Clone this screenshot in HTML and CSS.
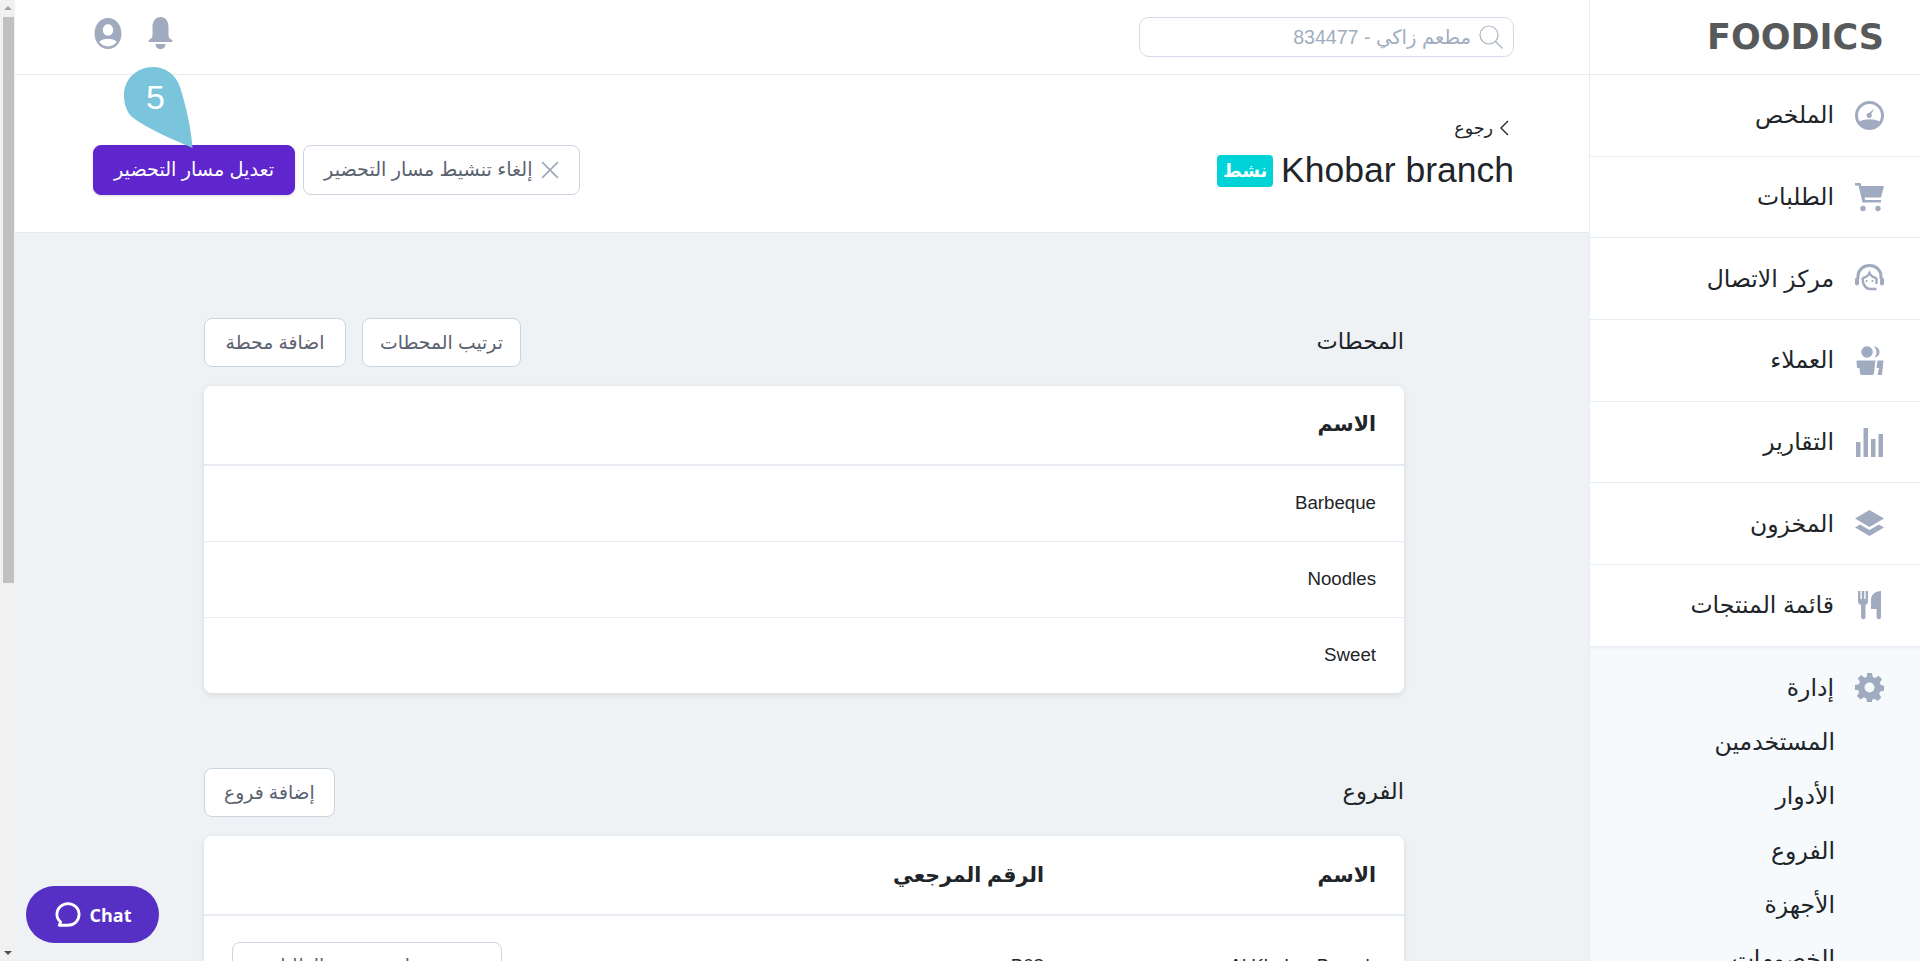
FILE: index.html
```html
<!DOCTYPE html>
<html lang="ar" dir="rtl">
<head>
    <meta charset="UTF-8">
    <meta name="viewport" content="width=device-width, initial-scale=1.0">
    <title>Foodics Console</title>
    <link rel="stylesheet" href="styles.css">
</head>
<body>
    <div class="app">
        <aside class="sidebar">
            <div class="logo-row"><span class="logo" dir="ltr">FOODICS</span></div>
            <nav>
                <a class="nav-item">
                    <svg class="nav-icon" viewBox="0 0 29 29"><path fill-rule="evenodd" d="M14.500 0a14.500 14.500 0 1 1 0 29 14.500 14.500 0 0 1 0-29zm0 3A11.500 11.500 0 0 0 3 14.500c0 2.200.6 4.200 1.700 6 2.700-1.500 6-2.300 9.800-2.300s7.100.8 9.800 2.300c1.100-1.800 1.700-3.800 1.700-6A11.500 11.500 0 0 0 14.500 3z"/><path d="M19.500 7.500l-3.200 5.200a2.700 2.700 0 1 1-1.900-1z"/></svg>
                    <span>الملخص</span>
                </a>
                <a class="nav-item">
                    <svg class="nav-icon" viewBox="0 0 29 29"><path d="M0 0h5.500l1 3H29l-3 11.500H9.500l.7 2.500H26v2.500H7.500L3.500 2.500H0z"/><circle cx="8" cy="25.500" r="2.700"/><circle cx="23" cy="25.500" r="2.700"/></svg>
                    <span>الطلبات</span>
                </a>
                <a class="nav-item">
                    <svg class="nav-icon" viewBox="0 0 29 29">
                        <path class="icon-line" stroke-width="3" d="M3 15v-2.500C3 6 8 1.500 14.500 1.500S26 6 26 12.500V15"/>
                        <rect x="0" y="13.500" width="4" height="8" rx="2"/>
                        <rect x="25" y="13.500" width="4" height="8" rx="2"/>
                        <path class="icon-line" stroke-width="2.400" d="M7.500 14c3.500-.5 5.800-2.500 7-5 1.200 2.500 3.500 4.500 7 5"/>
                        <path class="icon-line" stroke-width="2.400" d="M7.500 14c0 6 3 11 7.500 11h6.500"/>
                        <path class="icon-line" stroke-width="2.400" d="M21.500 14v6"/>
                        <circle cx="11.500" cy="17" r="1.100"/>
                        <circle cx="17.500" cy="17" r="1.100"/>
                    </svg>
                    <span>مركز الاتصال</span>
                </a>
                <a class="nav-item">
                    <svg class="nav-icon" viewBox="0 0 29 29"><circle cx="12" cy="6" r="5.800"/><path d="M19 .5c3.500 0 5.500 2.500 5.500 5.500S22.500 11 19.500 11.500C21 9.500 21.500 8 21.500 6S20.500 2 19 .5z"/><path d="M1.500 14.500h19L19 27a2 2 0 0 1-2 2H7a2 2 0 0 1-2-2L4.500 22H2z"/><path d="M22.500 14.500H28.500L27 29h-4.500L24 22H21.500z"/></svg>
                    <span>العملاء</span>
                </a>
                <a class="nav-item">
                    <svg class="nav-icon" viewBox="0 0 29 29"><path d="M1 14h4.500v15H1zM8.500 0H13v29H8.500zM16 11h4.500v18H16zM23.500 6H28v23h-4.500z"/></svg>
                    <span>التقارير</span>
                </a>
                <a class="nav-item">
                    <svg class="nav-icon" viewBox="0 0 29 29"><path d="M14.500 1L29 9.500 14.500 18 0 9.500z"/><path d="M5 15.500l9.500 5.500 9.500-5.500 5 3-14.500 8.500L0 18.500z"/></svg>
                    <span>المخزون</span>
                </a>
                <a class="nav-item">
                    <svg class="nav-icon" viewBox="0 0 29 29"><path d="M3 0h2.400v8h1.400V0h2.400v8h1.400V0H13v10c0 2-1 3.500-2.500 4v12a2.200 2.200 0 0 1-4.400 0V14C4 13.500 3 12 3 10z"/><path d="M26 0v26a2.200 2.200 0 0 1-4.400 0V18H16V9c0-5 4-9 10-9z"/></svg>
                    <span>قائمة المنتجات</span>
                </a>
            </nav>
            <div class="nav-group">
                <div class="group-title">
                    <svg class="nav-icon" viewBox="0 0 29 29"><path fill-rule="evenodd" d="M12 0h5l.8 4 2.400 1 3.400-2.300 3.500 3.500L24.800 9.600l1 2.400 3.200.8v5l-3.900.8-1 2.400 2.200 3.400-3.500 3.500-3.400-2.200-2.400 1L17 29h-5l-.8-3.800-2.400-1-3.400 2.200-3.500-3.500 2.200-3.400-1-2.400L0 17v-5l3.900-.8 1-2.400-2.200-3.400 3.500-3.500L9.600 4.700l2.400-1zm2.500 9.500a5 5 0 1 0 0 10 5 5 0 0 0 0-10z"/></svg>
                    <span>إدارة</span>
                </div>
                <a class="sub-item">المستخدمين</a>
                <a class="sub-item">الأدوار</a>
                <a class="sub-item">الفروع</a>
                <a class="sub-item">الأجهزة</a>
                <a class="sub-item">الخصومات</a>
            </div>
        </aside>

        <main class="main">
            <div class="topbar">
                <div class="search">
                    <svg class="search-icon" viewBox="0 0 24 24"><circle cx="10" cy="10" r="9"/><path d="M16.500 16.500L23.500 23.500"/></svg>
                    <span>مطعم زاكي - 834477</span>
                </div>
                <div class="top-icons">
                    <svg class="bell" viewBox="0 0 24 32"><path d="M12 0c5 0 8 4 8 10v8c0 3 2 4 3.500 5 .8.600.5 2-.5 2H1c-1 0-1.300-1.400-.5-2C2 22 4 21 4 18v-8C4 4 7 0 12 0z"/><path d="M7 27h10c0 3-2 5-5 5s-5-2-5-5z"/></svg>
                    <svg class="user" viewBox="0 0 26 30"><path fill-rule="evenodd" d="M13 0c7.500 0 13 6.500 13 15s-5.500 15-13 15S0 23.500 0 15 5.500 0 13 0zm0 6c-3 0-5 2.500-5 5.500S10 17 13 17s5-2.500 5-5.500S16 6 13 6zm0 14c-3.500 0-6.500 1-8.500 3 2 2.800 5 4.500 8.500 4.500s6.500-1.700 8.500-4.500c-2-2-5-3-8.500-3z"/></svg>
                </div>
            </div>

            <div class="page-head">
                <div class="head-title">
                    <a class="back-link">
                        <svg class="chevron" viewBox="0 0 10 16"><path d="M9 1L2 8l7 7"/></svg>
                        <span>رجوع</span>
                    </a>
                    <h1><span class="latin">Khobar branch</span> <span class="badge">نشط</span></h1>
                </div>
                <div class="head-actions">
                    <button class="btn">
                        <svg class="x-icon" viewBox="0 0 16 16"><path d="M1 1l14 14M15 1L1 15"/></svg>
                        إلغاء تنشيط مسار التحضير
                    </button>
                    <button class="btn btn-primary">تعديل مسار التحضير</button>
                    <div class="step-pin">
                        <svg viewBox="0 0 69 82"><path d="M29 0C42 0 52 8 56 20c7 22 11 42 12.500 61C48 72 24 62 8 50 2 44 0 36 0 28 0 12 13 0 29 0z"/></svg>
                        <span dir="ltr">5</span>
                    </div>
                </div>
            </div>

            <div class="content">
                <section class="section">
                    <div class="section-head">
                        <h2>المحطات</h2>
                        <div class="section-actions">
                            <button class="btn btn-small btn-sort">ترتيب المحطات</button>
                            <button class="btn btn-small btn-add">اضافة محطة</button>
                        </div>
                    </div>
                    <div class="card">
                        <div class="card-row card-head"><b>الاسم</b></div>
                        <div class="card-row latin">Barbeque</div>
                        <div class="card-row latin">Noodles</div>
                        <div class="card-row latin">Sweet</div>
                    </div>
                </section>

                <section class="section">
                    <div class="section-head">
                        <h2>الفروع</h2>
                        <div class="section-actions">
                            <button class="btn btn-small">إضافة فروع</button>
                        </div>
                    </div>
                    <div class="card">
                        <div class="card-row card-head branch-grid">
                            <b>الاسم</b>
                            <b>الرقم المرجعي</b>
                            <span></span>
                        </div>
                        <div class="card-row branch-grid branch-row">
                            <span class="latin">Al Khobar Branch</span>
                            <span class="latin">B08</span>
                            <span class="branch-action"><button class="btn btn-small">تعيين شاشة عرض الطلبات</button></span>
                        </div>
                    </div>
                </section>
            </div>
        </main>

        <div class="scrollbar">
            <span class="arrow arrow-up"></span>
            <span class="thumb"></span>
            <span class="arrow arrow-down"></span>
        </div>
    </div>

    <button class="chat" dir="ltr">
        <svg viewBox="0 0 24 24"><path d="M12 2.200c5.300 0 9.500 4 9.500 9.300s-4.200 9.300-9.500 9.300H4.500l1.200-2.800C3.700 16.300 2.500 14 2.500 11.500 2.500 6.200 6.700 2.200 12 2.200z"/></svg>
        <span>Chat</span>
    </button>
</body>
</html>
```

FILE: styles.css
```css
:root {
    --purple: #5f26cd;
    --icon: #a1abbf;
    --line: #e8ebf3;
    --border: #cbd5e0;
    --text: #212529;
    --muted: #5a6270;
}

* {
    margin: 0;
    padding: 0;
    box-sizing: border-box;
}

html, body {
    height: 100%;
    overflow: hidden;
}

body {
    font-family: "Liberation Sans", "Noto Sans", "DejaVu Sans", sans-serif;
    color: var(--text);
    background-color: #eff2f5;
}

.latin {
    font-family: "Liberation Sans", sans-serif;
}

.app {
    display: flex;
    height: 961px;
}

/* sidebar */
.sidebar {
    width: 331px;
    flex-shrink: 0;
    background-color: white;
    border-left: 1px solid var(--line);
    overflow: hidden;
}

.logo-row {
    height: 75px;
    padding: 15px 36px 0 0;
    border-bottom: 1px solid var(--line);
}

.logo {
    display: block;
    width: 177px;
    font-family: "DejaVu Sans", sans-serif;
    font-weight: 700;
    font-size: 35px;
    line-height: 44px;
    color: #58595b;
    text-align: left;
}

.nav-item {
    display: flex;
    align-items: center;
    gap: 21px;
    height: 81.7px;
    padding-right: 36px;
    font-size: 23.5px;
    border-bottom: 1px solid var(--line);
}

.nav-icon {
    width: 29px;
    height: 29px;
    flex-shrink: 0;
    fill: var(--icon);
}

.icon-line {
    fill: none;
    stroke: var(--icon);
}

.nav-group {
    height: 320px;
    padding: 26px 36px 0 0;
    background-color: #f7fafc;
    box-shadow: inset 0 4px 4px -3px rgba(0, 0, 0, 0.06);
}

.group-title {
    display: flex;
    align-items: center;
    gap: 21px;
    height: 30px;
    font-size: 23.5px;
}

.sub-item {
    display: block;
    height: 54.4px;
    padding-right: 49px;
    padding-top: 24px;
    font-size: 23.5px;
    line-height: 30px;
}

/* main column */
.main {
    flex: 1;
    min-width: 0;
    background-color: #eff2f5;
    overflow: hidden;
}

.topbar {
    display: flex;
    align-items: center;
    justify-content: space-between;
    height: 75px;
    padding: 0 75px 0 78px;
    background-color: white;
    border-bottom: 1px solid var(--line);
}

.search {
    display: flex;
    align-items: center;
    gap: 8px;
    width: 375px;
    height: 40px;
    padding-right: 10px;
    color: #a1adc0;
    font-size: 19.6px;
    border: 1px solid #d5dae8;
    border-radius: 10px;
}

.search-icon {
    width: 24px;
    height: 24px;
    fill: none;
    stroke: #a9b4c6;
    stroke-width: 1.200;
}

.top-icons {
    display: flex;
    align-items: center;
    gap: 23px;
    margin-top: -8px;
}

.bell {
    width: 29px;
    height: 32px;
    fill: var(--icon);
}

.user {
    width: 30px;
    height: 31px;
    fill: var(--icon);
}

.page-head {
    display: flex;
    align-items: center;
    justify-content: space-between;
    height: 158px;
    padding: 0 75px 0 78px;
    background-color: white;
    border-bottom: 1px solid #e6eaf0;
}

.head-title {
    padding-top: 2px;
}

.back-link {
    display: flex;
    align-items: center;
    gap: 6px;
    font-size: 17.5px;
    margin: 0 5px 9px 0;
}

.chevron {
    width: 10px;
    height: 16px;
    fill: none;
    stroke: var(--text);
    stroke-width: 1.400;
}

h1 {
    display: flex;
    align-items: center;
    gap: 8px;
    font-weight: 400;
    font-size: 35.5px;
    line-height: 44px;
}

.badge {
    display: inline-block;
    width: 56px;
    height: 32px;
    margin-top: 2px;
    font-size: 18px;
    font-weight: 700;
    line-height: 32px;
    text-align: center;
    color: white;
    background-color: #00d3d8;
    border-radius: 4px;
}

.head-actions {
    position: relative;
    display: flex;
    gap: 8px;
    margin-top: 32px;
}

.btn {
    display: inline-flex;
    align-items: center;
    justify-content: center;
    gap: 8px;
    height: 50px;
    padding: 0 20px;
    font-family: inherit;
    font-size: 19.2px;
    white-space: nowrap;
    color: var(--muted);
    background-color: white;
    border: 1px solid var(--border);
    border-radius: 8px;
}

.btn-primary {
    color: white;
    background-color: var(--purple);
    border-color: var(--purple);
    box-shadow: 0 1px 3px rgba(0, 0, 0, 0.15);
}

.btn-small {
    height: 49px;
    font-size: 18.8px;
    padding: 0 19px;
}

.btn-sort {
    width: 159px;
    padding: 0;
}

.btn-add {
    width: 142px;
    padding: 0;
}

.x-icon {
    width: 18px;
    height: 18px;
    fill: none;
    stroke: #9aa6b8;
    stroke-width: 1.400;
}

.step-pin {
    position: absolute;
    left: 31px;
    top: -78px;
    width: 69px;
    height: 82px;
}

.step-pin svg {
    display: block;
    width: 69px;
    height: 82px;
    fill: #7ac4dc;
}

.step-pin span {
    position: absolute;
    left: 22px;
    top: 10px;
    font-size: 34px;
    line-height: 40px;
    color: white;
}

/* content */
.content {
    padding: 85px 185px 0 189px;
}

.section {
    margin-bottom: 75px;
}

.section-head {
    display: flex;
    align-items: center;
    justify-content: space-between;
    margin-bottom: 19px;
}

h2 {
    margin-bottom: 3px;
    font-weight: 400;
    font-size: 22.6px;
}

.section-actions {
    display: flex;
    gap: 16px;
}

.card {
    background-color: white;
    border-radius: 8px;
    box-shadow: 0 2px 6px rgba(0, 0, 0, 0.1);
}

.card-row {
    display: flex;
    align-items: center;
    height: 76px;
    padding: 0 28px 2px;
    font-size: 18.7px;
    border-bottom: 1px solid var(--line);
}

.card-row:last-child {
    height: 75px;
    border-bottom: none;
}

.card-head {
    height: 80px;
    padding-bottom: 2px;
    font-size: 20.5px;
    border-bottom: 2px solid var(--line);
}

.branch-grid {
    display: grid;
    grid-template-columns: 332px 1fr auto;
}

.card-head.branch-grid {
    padding-bottom: 0;
}

.card-row.branch-row {
    height: 100px;
    padding-bottom: 0;
}

.branch-action {
    justify-self: end;
}

.branch-action .btn {
    width: 270px;
}

/* fake left scrollbar, the page is rtl */
.scrollbar {
    position: relative;
    width: 15px;
    flex-shrink: 0;
    background-color: #f1f1f1;
}

.thumb {
    position: absolute;
    top: 17px;
    left: 3px;
    width: 11px;
    height: 566px;
    background-color: #c1c1c1;
}

.arrow {
    position: absolute;
    left: 4px;
    width: 0;
    height: 0;
    border-left: 4px solid transparent;
    border-right: 4px solid transparent;
}

.arrow-up {
    top: 6px;
    border-bottom: 4px solid #a3a3a3;
}

.arrow-down {
    bottom: 6px;
    border-top: 4px solid #505050;
}

.chat {
    position: fixed;
    left: 26px;
    bottom: 18px;
    display: flex;
    align-items: center;
    justify-content: center;
    gap: 8px;
    width: 133px;
    height: 57px;
    font-family: "Open Sans", sans-serif;
    font-size: 18px;
    font-weight: 700;
    color: white;
    background-color: #5630c4;
    border: none;
    border-radius: 29px;
}

.chat svg {
    width: 28px;
    height: 28px;
    fill: none;
    stroke: white;
    stroke-width: 2.400;
    stroke-linejoin: round;
}
```
